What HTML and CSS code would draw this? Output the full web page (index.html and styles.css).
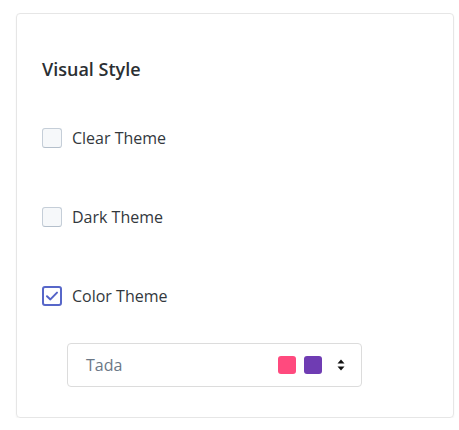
FILE: index.html
```html
<!DOCTYPE html>
<html>
<head>
<meta charset="utf-8">
<link rel="stylesheet" href="styles.css">
</head>
<body>
<div class="card">
  <h2 class="title">Visual Style</h2>
  <label class="option">
    <span class="box"></span>
    <span class="label">Clear Theme</span>
  </label>
  <label class="option">
    <span class="box"></span>
    <span class="label">Dark Theme</span>
  </label>
  <label class="option">
    <span class="box checked">
      <svg width="14" height="12" viewBox="0 0 14 12"><path d="M2 6.2 L5.4 9.4 L12 2.6" fill="none" stroke="#5463c8" stroke-width="2" stroke-linecap="round" stroke-linejoin="round"/></svg>
    </span>
    <span class="label">Color Theme</span>
  </label>
  <div class="select">
    <span class="value">Tada</span>
    <span class="swatches">
      <span class="swatch pink"></span>
      <span class="swatch purple"></span>
    </span>
    <svg class="arrows" width="8" height="12" viewBox="0 0 8 12"><path d="M4 0.5 L7.5 4.5 L0.5 4.5 Z" fill="#111"/><path d="M4 11.5 L7.5 7.5 L0.5 7.5 Z" fill="#111"/></svg>
  </div>
</div>
</body>
</html>
```
FILE: styles.css
```css
html, body {
  margin: 0;
  background: #ffffff;
}
body {
  padding: 13px 5px 0 16px;
  font-family: "Open Sans", "Noto Sans", sans-serif;
  color: #333a40;
}
.card {
  box-sizing: border-box;
  width: 438px;
  height: 405px;
  border: 1px solid #e6e6e6;
  border-radius: 4px;
  box-shadow: 0 1px 2px rgba(0,0,0,0.06);
  padding: 42px 25px 0 25px;
}
.title {
  margin: 0 0 44px 0;
  font-size: 18px;
  font-weight: 600;
  line-height: 26px;
  color: #2b2f33;
}
.option {
  display: flex;
  align-items: center;
  gap: 10px;
  height: 24px;
  margin-bottom: 55px;
}
.option:nth-of-type(3) { margin-bottom: 35px; }
.box {
  box-sizing: border-box;
  width: 20px;
  height: 20px;
  border: 1px solid #c5ced8;
  border-bottom-color: #b4bfcb;
  border-radius: 3px;
  background: #f6f8fa;
  display: flex;
  align-items: center;
  justify-content: center;
}
.box.checked {
  border: 2px solid #5767c9;
  background: #ffffff;
}
.label {
  font-size: 16px;
  line-height: 24px;
  color: #33383d;
}
.select {
  box-sizing: border-box;
  margin-left: 25px;
  width: 295px;
  height: 44px;
  border: 1px solid #dcdcdc;
  border-radius: 4px;
  display: flex;
  align-items: center;
  padding: 0 16px 0 18px;
}
.value {
  flex: 1;
  font-size: 16px;
  color: #6b7886;
}
.swatches {
  display: flex;
  gap: 8px;
  margin-right: 15px;
}
.swatch {
  width: 18px;
  height: 18px;
  border-radius: 3px;
}
.pink { background: #ff4a7e; }
.purple { background: #6f3cb3; }
.arrows { display: block; }
```
